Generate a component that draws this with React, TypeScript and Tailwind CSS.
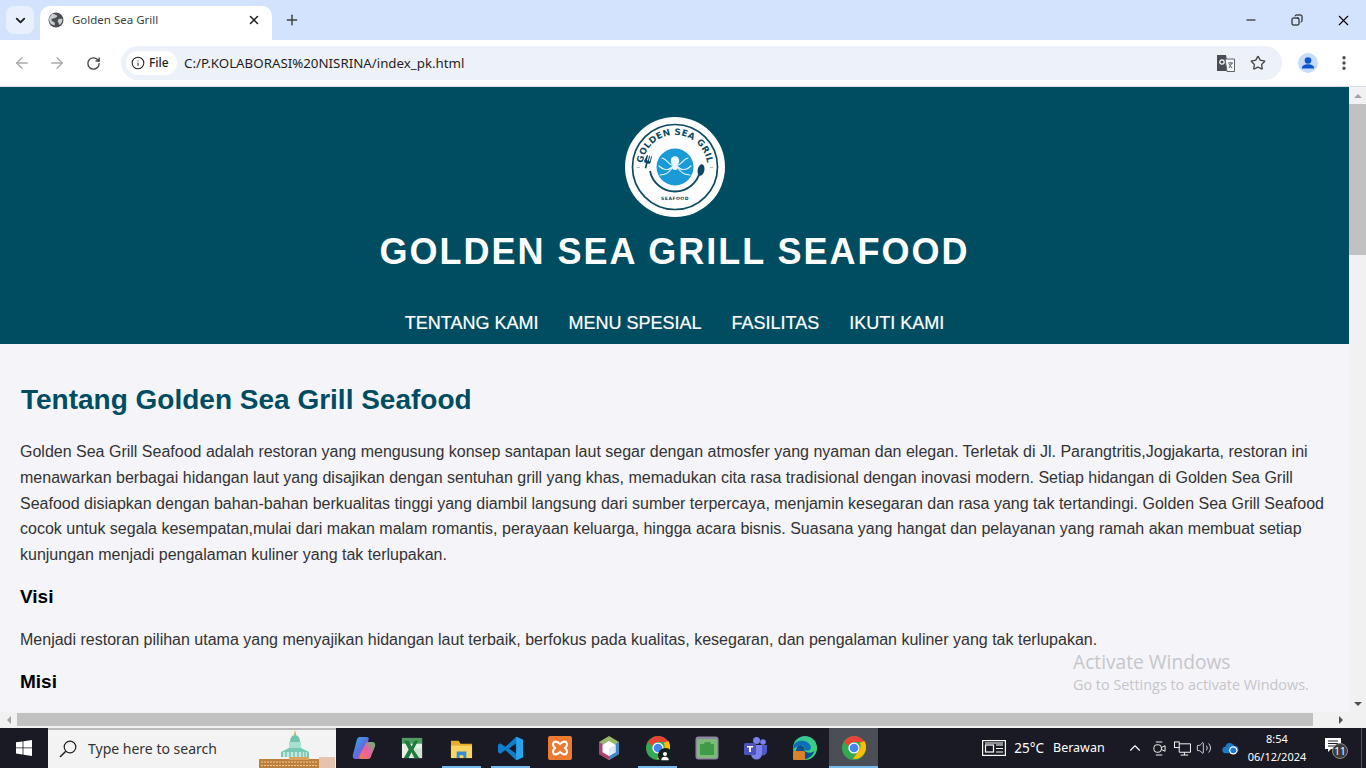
import { ArrowLeft, ArrowRight, Copy, Info, Minus, Plus, RotateCw, Star, X, ChevronDown, ChevronUp, MoreVertical, Volume2 } from "lucide-react";

const paragraph =
  "Golden Sea Grill Seafood adalah restoran yang mengusung konsep santapan laut segar dengan atmosfer yang nyaman dan elegan. Terletak di Jl. Parangtritis,Jogjakarta, restoran ini menawarkan berbagai hidangan laut yang disajikan dengan sentuhan grill yang khas, memadukan cita rasa tradisional dengan inovasi modern. Setiap hidangan di Golden Sea Grill Seafood disiapkan dengan bahan-bahan berkualitas tinggi yang diambil langsung dari sumber terpercaya, menjamin kesegaran dan rasa yang tak tertandingi. Golden Sea Grill Seafood cocok untuk segala kesempatan,mulai dari makan malam romantis, perayaan keluarga, hingga acara bisnis. Suasana yang hangat dan pelayanan yang ramah akan membuat setiap kunjungan menjadi pengalaman kuliner yang tak terlupakan.";

const navLinks = ["TENTANG KAMI", "MENU SPESIAL", "FASILITAS", "IKUTI KAMI"];

const Logo = () => (
  <svg viewBox="0 0 100 100" className="w-[100px] h-[100px] block">
    <circle cx="50" cy="50" r="50" fill="#fff" />
    <circle cx="50" cy="50" r="42.500" fill="none" stroke="#0c4a63" strokeWidth="1.700" />
    <path d="M25 54 A25.500 25.500 0 0 0 75 54" fill="none" stroke="#0c4a63" strokeWidth="1.800" />
    <defs>
      <path id="logoTop" d="M18 56 A32.500 32.500 0 1 1 82 56" />
    </defs>
    <text fontSize="8.800" fontWeight="700" fill="#0c4a63" fontFamily="'DejaVu Sans', sans-serif" letterSpacing="0.300">
      <textPath href="#logoTop" startOffset="50%" textAnchor="middle">GOLDEN SEA GRIL</textPath>
    </text>
    <text x="50" y="83" textAnchor="middle" fontSize="4.500" fontWeight="700" fill="#0c4a63" fontFamily="'DejaVu Sans', sans-serif" letterSpacing="0.500">SEAFOOD</text>
    <circle cx="50" cy="50" r="18.500" fill="#1a9ad6" />
    <g fill="none" stroke="#eaf8fd" strokeWidth="1.100" strokeLinecap="round">
      <path d="M47 50 C43 54 38 53 34 49" />
      <path d="M47 51 C44 56 40 58 35 58" />
      <path d="M53 50 C57 54 62 53 66 49" />
      <path d="M53 51 C56 56 60 58 65 58" />
      <path d="M47 48 C43 47 42 42 37 41" />
      <path d="M53 48 C57 47 58 42 63 41" />
    </g>
    <ellipse cx="50" cy="44" rx="4.200" ry="4.800" fill="#eaf8fd" />
    <ellipse cx="50" cy="50" rx="3" ry="3" fill="#eaf8fd" />
    <g fill="#0c4a63">
      <path d="M22 38l1 .3-1 5 1 .3 1-5 1 .3-1 5 1 .3 1-5 1 .3-1.400 6c-.3 1-1 1.400-2 1.200l-1-.3-1.300 5-1.600-.4 1.300-5-.8-.3c-.8-.3-1.200-1-1-2z" />
      <ellipse cx="76" cy="53" rx="3.400" ry="5.800" transform="rotate(12 76 53)" />
    </g>
    <path d="M12 50.500h3M85 50.500h3" stroke="#9aa7ad" strokeWidth="0.800" />
  </svg>
);

const ChromeIcon = ({ size = 24 }: { size?: number }) => (
  <svg viewBox="0 0 24 24" width={size} height={size}>
    <circle cx="12" cy="12" r="12" fill="#34a853" />
    <path d="M12 0a12 12 0 0 1 10.400 6H12a6 6 0 0 0-5.600 3.800L2 6.300A12 12 0 0 1 12 0z" fill="#ea4335" />
    <path d="M22.400 6A12 12 0 0 1 11 24l5.200-7.800A6 6 0 0 0 17.600 8z" fill="#fbbc04" transform="translate(0 -1)" />
    <circle cx="12" cy="12" r="5.600" fill="#fff" />
    <circle cx="12" cy="12" r="4.300" fill="#4285f4" />
  </svg>
);

const TaskIcon = ({ children, active, open }: { children: React.ReactNode; active?: boolean; open?: boolean }) => (
  <div className={`relative w-[49px] h-full flex items-center justify-center ${active ? "bg-[#4b4e55]" : ""}`}>
    {children}
    {(open || active) && <div className={`absolute bottom-0 h-[2px] bg-[#76b9ed] ${active ? "inset-x-0" : "inset-x-[5px]"}`} />}
  </div>
);

const TaskbarIcons = () => (
  <>
    <TaskIcon>
      <svg viewBox="0 0 24 24" width="24" height="24">
        <defs>
          <linearGradient id="copA" x1="0" y1="0" x2="1" y2="1">
            <stop offset="0" stopColor="#2fb6e8" />
            <stop offset="0.5" stopColor="#5b6fe0" />
            <stop offset="1" stopColor="#c94fd0" />
          </linearGradient>
          <linearGradient id="copB" x1="0" y1="1" x2="1" y2="0">
            <stop offset="0" stopColor="#f4803c" />
            <stop offset="0.5" stopColor="#e95fa8" />
            <stop offset="1" stopColor="#54c06a" />
          </linearGradient>
        </defs>
        <path d="M8 1h7c2 0 2 2 1.400 3.400L11 20c-.8 2.400-2 3-4 3H4c-3 0-3.600-2.400-3-4.600L4.500 5C5.200 2.400 6 1 8 1z" fill="url(#copA)" />
        <path d="M16 6h4c3 0 3.600 2.400 3 4.600L19.500 19c-.7 2.600-1.500 4-3.500 4H9c-2 0-2-2-1.400-3.400L13 9c.6-2 1.400-3 3-3z" fill="url(#copB)" />
      </svg>
    </TaskIcon>
    <TaskIcon>
      <svg viewBox="0 0 24 24" width="23" height="23">
        <rect x="1" y="1" width="21" height="21" fill="#e6f2e6" />
        <rect x="1" y="1" width="21" height="6" fill="#4d9e5f" />
        <path d="M11 12h11v10H11z" fill="#cfe5cf" />
        <path d="M3 4l5 0 3 6 3-6 4 0-5 9 6 9-5 0-3-6-3 6-5 0 5-9z" fill="#1f7a3d" />
      </svg>
    </TaskIcon>
    <TaskIcon open>
      <svg viewBox="0 0 24 24" width="23" height="23">
        <path d="M1 4h8l2 3h12v15H1z" fill="#e8ad2c" />
        <path d="M1 9h22v13H1z" fill="#fcd462" />
        <path d="M7 15h10v7h-3v-3h-4v3H7z" fill="#2f8fd8" />
      </svg>
    </TaskIcon>
    <TaskIcon open>
      <svg viewBox="0 0 24 24" width="25" height="25">
        <path d="M17.500 0.800 24 3.500v17L17.500 23.200 7 13.500 2.400 17 0 15.700V8.300L2.400 7 7 10.500z" fill="#0f7fcb" />
        <path d="M17.500 7 10.500 12l7 5z" fill="#1a1a24" />
        <path d="M17.500 0.800 24 3.500v17l-6.500 2.700z" fill="#26a4ec" />
      </svg>
    </TaskIcon>
    <TaskIcon>
      <svg viewBox="0 0 24 24" width="24" height="24">
        <rect width="24" height="24" rx="2" fill="#ec7a30" />
        <path d="M6 6c2-1 4 0 6 2 2-2 4-3 6-2 2 2 1 4-1 6 2 2 3 4 1 6-2 1-4 0-6-2-2 2-4 3-6 2-2-2-1-4 1-6-2-2-3-4-1-6z" fill="none" stroke="#fff" strokeWidth="2" />
      </svg>
    </TaskIcon>
    <TaskIcon>
      <svg viewBox="0 0 24 24" width="24" height="24">
        <path d="M12 0 22 6v12L12 24 2 18V6z" fill="#9bb86a" />
        <path d="M2 6v12l10 6V12z" fill="#b0416e" />
        <path d="M22 6v12l-10 6V12z" fill="#3f86c8" />
        <path d="M12 5l6.500 3.700v7.500L12 20l-6.500-3.800V8.700z" fill="#fff" />
        <path d="M12 12.500v7.500l6.500-3.800V8.700z" fill="#dbe8f5" />
      </svg>
    </TaskIcon>
    <TaskIcon open>
      <div className="relative w-6 h-6">
        <ChromeIcon />
        <div className="absolute -right-[3px] -bottom-[3px] w-[15px] h-[15px] rounded-full bg-[#10201c] flex items-center justify-center">
          <svg viewBox="0 0 12 12" width="10" height="10">
            <circle cx="6" cy="3.600" r="2.400" fill="#fff" />
            <path d="M1.500 11c0-3 2-4 4.500-4s4.500 1 4.500 4z" fill="#fff" />
          </svg>
        </div>
      </div>
    </TaskIcon>
    <TaskIcon>
      <svg viewBox="0 0 24 24" width="24" height="24">
        <rect x="0.500" y="0.500" width="23" height="23" rx="3" fill="#8d8aa0" />
        <rect x="2" y="3" width="20" height="19" rx="2" fill="#7cba78" />
        <path d="M5 8h4l1-2h5l1 2h3v11H5z" fill="#3f9a4a" />
      </svg>
    </TaskIcon>
    <TaskIcon>
      <svg viewBox="0 0 24 24" width="24" height="24">
        <circle cx="19" cy="6" r="2.800" fill="#7b83eb" />
        <circle cx="12.500" cy="4.500" r="3.500" fill="#7b83eb" />
        <path d="M16 9h7v7a4 4 0 0 1-7 2z" fill="#5059c9" />
        <path d="M7 9h11v9a5.500 5.500 0 0 1-11 0z" fill="#7b83eb" />
        <rect x="0" y="7" width="12" height="12" rx="1.500" fill="#4b53bc" />
        <path d="M3 10h6v1.600H6.900V16H5.100v-4.400H3z" fill="#fff" />
      </svg>
    </TaskIcon>
    <TaskIcon>
      <div className="relative w-6 h-6">
        <svg viewBox="0 0 24 24" width="24" height="24">
          <defs>
            <linearGradient id="edgeA" x1="0" y1="0" x2="1" y2="1">
              <stop offset="0" stopColor="#35c1a6" />
              <stop offset="1" stopColor="#3fd66f" />
            </linearGradient>
          </defs>
          <circle cx="12" cy="12" r="12" fill="url(#edgeA)" />
          <path d="M0 12C1 6 6 4 11 5c5 1 8 5 6.500 8-1 2-5 2-6 0 1-3-3-5-6-3-3 1-5 3-5.500 2z" fill="#0c6fb5" />
          <path d="M5 10c4-2 7 1 6.500 4 1 3 6 4 10 1-2 6-8 9-13 8-5-2-8-7-3.500-13z" fill="#0a4f8f" />
        </svg>
        <div className="absolute left-0 bottom-0 w-3 h-[9px] bg-[#d9822b] rounded-[1px]" />
      </div>
    </TaskIcon>
    <TaskIcon active>
      <ChromeIcon />
    </TaskIcon>
  </>
);

export default function App() {
  return (
    <div className="h-screen w-full overflow-hidden flex flex-col bg-white font-['Liberation_Sans',sans-serif]">
      {/* Tab strip */}
      <div className="h-[40px] shrink-0 bg-[#d3e3fd] flex font-['Noto_Sans',sans-serif]">
        <div className="pl-[6px] pt-[6px]">
          <div className="w-[28px] h-[28px] rounded-[8px] bg-[#e8f0fe] flex items-center justify-center">
            <ChevronDown size={15} strokeWidth={3} className="text-[#1f1f1f]" />
          </div>
        </div>
        <div className="ml-[6px] mt-[6px] w-[232px] h-[34px] pb-[6px] bg-white rounded-t-[10px] flex items-center pl-[8px] pr-[11px]">
          <svg viewBox="0 0 16 16" width="16" height="16">
            <circle cx="8" cy="8" r="7.500" fill="#4a4d52" />
            <path d="M5 1.500c1 1 3 1 4 2s-1 2-2 2.500-3 0-3.500 1.500S5 9.500 6 10s1 2 .5 3.500C3.500 13 1.500 11 1 8c0-2.500 1.500-5 4-6.500zM11 7c1-.5 2.500-.5 3.500 0 0 2.500-1 4.500-3 6-.5-1.500-1-2-1.500-3s0-2.500 1-3z" fill="#c9ccd1" />
          </svg>
          <span className="ml-[8px] flex-1 text-[11.500px] text-[#3c4043]">Golden Sea Grill</span>
          <X size={14} strokeWidth={2.600} className="text-[#1f1f1f]" />
        </div>
        <div className="ml-[12px] mt-[6px] h-[28px] flex items-center">
          <Plus size={16} strokeWidth={2.200} className="text-[#3c4043]" />
        </div>
        <div className="flex-1" />
        <div className="flex items-center text-black">
          <div className="w-[46px] flex justify-center"><Minus size={14} strokeWidth={1.800} /></div>
          <div className="w-[46px] flex justify-center"><Copy size={12} strokeWidth={2} className="-scale-x-100" /></div>
          <div className="w-[46px] flex justify-center"><X size={17} strokeWidth={1.600} /></div>
        </div>
      </div>

      {/* Toolbar */}
      <div className="h-[47px] shrink-0 bg-white rounded-t-[10px] flex items-center border-b border-[#d8dde3] font-['Noto_Sans',sans-serif]">
        <div className="w-[121px] pl-[13px] flex items-center gap-[17px] text-[#a9abae] shrink-0">
          <ArrowLeft size={18} strokeWidth={1.800} />
          <ArrowRight size={18} strokeWidth={1.800} />
          <RotateCw size={15} strokeWidth={2.200} className="text-[#474747] ml-[3px]" />
        </div>
        <div className="w-[1161px] h-[34px] rounded-full bg-[#edf2fa] flex items-center pl-[5px] pr-[16px] shrink-0">
          <div className="h-[24px] w-[51px] rounded-full bg-white flex items-center pl-[5px] gap-[4px] text-[#1f1f1f]">
            <Info size={14} strokeWidth={1.800} />
            <span className="text-[12px] font-medium">File</span>
          </div>
          <span className="ml-[7px] text-[13.300px] text-[#1f1f1f] flex-1 mt-px">C:/P.KOLABORASI%20NISRINA/index_pk.html</span>
          <svg viewBox="0 0 18 18" width="18" height="18" className="mr-[15px]">
            <path d="M0 1h9l3 16H0z" fill="#4a4d52" />
            <path d="M8 5h9.500v12.500H10z" fill="#f5f6f8" stroke="#5f6368" />
            <circle cx="5" cy="8" r="2.200" fill="none" stroke="#fff" strokeWidth="1.200" />
            <path d="M11 9h5M13.500 8v1M12 14l3-5M12 10l3 4" stroke="#5f6368" strokeWidth="1" fill="none" />
          </svg>
          <Star size={16} strokeWidth={2} className="text-[#474747]" />
        </div>
        <div className="ml-[16px] w-[20px] h-[20px] rounded-full bg-[#c7dcf8] flex items-center justify-center shrink-0">
          <svg viewBox="0 0 20 20" width="20" height="20">
            <circle cx="10" cy="7.500" r="3.300" fill="#0b57d0" />
            <path d="M3.800 15.500c0-3 3-4.200 6.200-4.200s6.200 1.200 6.200 4.200z" fill="#0b57d0" />
          </svg>
        </div>
        <MoreVertical size={18} strokeWidth={2.400} className="ml-[17px] text-[#474747] shrink-0" />
      </div>

      {/* Browser viewport */}
      <div className="relative flex-1 min-h-0 flex flex-col">
        <div className="flex-1 min-h-0 flex">
          <main className="flex-1 min-w-0 overflow-hidden bg-[#f4f4f9] text-[#333]">
            <header className="h-[257px] bg-[#004d61] pt-[30px] flex flex-col items-center text-white">
              <Logo />
              <h1 className="mt-[14px] text-[36px] leading-[41px] font-bold tracking-[2px]">GOLDEN SEA GRILL SEAFOOD</h1>
              <nav className="mt-[39px] flex gap-[30px] text-[18px] leading-[24px] [-webkit-text-stroke:0.2px_white]">
                {navLinks.map((link) => (
                  <a key={link}>{link}</a>
                ))}
              </nav>
            </header>
            <section className="px-[20px] pt-[40px]">
              <h2 className="pl-px text-[28px] leading-[32px] font-bold text-[#004d61]">Tentang Golden Sea Grill Seafood</h2>
              <p className="mt-[23.400px] text-[16px] leading-[25.600px]">{paragraph}</p>
              <h3 className="mt-[18.600px] text-[19px] leading-[22px] font-bold text-black">Visi</h3>
              <p className="mt-[19px] text-[16px] leading-[25.600px]">
                Menjadi restoran pilihan utama yang menyajikan hidangan laut terbaik, berfokus pada kualitas, kesegaran, dan pengalaman kuliner yang tak terlupakan.
              </p>
              <h3 className="mt-[18px] text-[19px] leading-[22px] font-bold text-black">Misi</h3>
            </section>
          </main>
          {/* Vertical scrollbar */}
          <div className="w-[17px] shrink-0 bg-[#f1f1f1] flex flex-col items-center">
            <div className="h-[17px] flex items-center justify-center">
              <div className="w-0 h-0 border-x-[4px] border-x-transparent border-b-[4px] border-b-[#a3a3a3]" />
            </div>
            <div className="w-full h-[151px] bg-[#c1c1c1]" />
            <div className="flex-1" />
            <div className="h-[17px] flex items-center justify-center">
              <div className="w-0 h-0 border-x-[4px] border-x-transparent border-t-[4px] border-t-[#505050]" />
            </div>
          </div>
        </div>
        {/* Horizontal scrollbar */}
        <div className="h-[16px] shrink-0 bg-[#f1f1f1] flex items-center">
          <div className="w-[17px] flex justify-center">
            <div className="w-0 h-0 border-y-[4px] border-y-transparent border-r-[4px] border-r-[#a3a3a3]" />
          </div>
          <div className="w-[1296px] h-[13px] mb-px bg-[#c1c1c1]" />
          <div className="w-[19px]" />
          <div className="w-[17px] flex justify-center">
            <div className="w-0 h-0 border-y-[4px] border-y-transparent border-l-[4px] border-l-[#505050]" />
          </div>
        </div>
        {/* Activation watermark */}
        <div className="absolute left-[1073px] top-[562px] text-[#c6c6ca] font-['Open_Sans',sans-serif]">
          <div className="text-[19.200px] leading-[26px]">Activate Windows</div>
          <div className="text-[14.400px] leading-[20px]">Go to Settings to activate Windows.</div>
        </div>
      </div>

      {/* Taskbar */}
      <footer className="h-[40px] shrink-0 bg-[#1a1a24] flex items-center text-white font-['Noto_Sans',sans-serif]">
        <div className="w-[48px] h-full flex items-center justify-center shrink-0">
          <svg viewBox="0 0 16 16" width="16" height="16" fill="#fff">
            <path d="M0 2.300 6.600 1.400V7.500H0zM7.400 1.300 16 0V7.500H7.400zM0 8.300H6.600V14.500L0 13.600zM7.400 8.300H16V16L7.400 14.700z" />
          </svg>
        </div>
        <div className="relative w-[288px] h-full bg-[#f3f3f3] border-t-2 border-[#b9b9b9] flex items-center pl-[11px] shrink-0 overflow-hidden">
          <svg viewBox="0 0 18 18" width="18" height="18" fill="none" stroke="#1f1f1f" strokeWidth="1.200">
            <circle cx="11" cy="7" r="5.800" />
            <path d="M6.800 11.200 1 17" strokeWidth="1.500" />
          </svg>
          <span className="ml-[11px] text-[14px] text-[#333] -mt-[2px]">Type here to search</span>
          <svg viewBox="0 0 76 38" width="76" height="38" className="absolute right-px bottom-0">
            <path d="M36 0l1 5h-2z" fill="#c9a23f" />
            <path d="M31 12c0-4 2-7 5-7s5 3 5 7z" fill="#6fc4ad" />
            <path d="M30 12h12v6H30z" fill="#a5e0d0" />
            <path d="M22 27v-5l8-4h12l8 4v5z" fill="#78c8b4" />
            <path d="M24 22h24v5H24z" fill="#bfeade" />
            <path d="M27 22v5M31 22v5M35 22v5M39 22v5M43 22v5M46 22v5" stroke="#4f9c88" strokeWidth="0.800" />
            <rect x="0" y="29" width="60" height="9" fill="#bd7f3d" />
            <rect x="30" y="27" width="20" height="3" fill="#d9a35c" />
            <rect x="60" y="27" width="16" height="11" fill="#e4c4ae" />
            <path d="M2 32h56M2 35.500h56" stroke="#f0cf90" strokeWidth="1" strokeDasharray="2 1" />
          </svg>
        </div>
        <div className="flex h-full shrink-0 ml-[3px]">
          <TaskbarIcons />
        </div>
        <div className="flex-1" />
        <div className="flex items-center h-full shrink-0">
          <svg viewBox="0 0 24 16" width="24" height="16" fill="none" stroke="#fff" strokeWidth="1.200">
            <rect x="0.600" y="0.600" width="22.800" height="14.800" />
            <rect x="3.500" y="5" width="8" height="7" />
            <path d="M14 5h7M14 8.500h7M14 12h7M3 3h18" />
          </svg>
          <span className="ml-[8px] text-[13.500px]">25°C</span>
          <span className="ml-[9px] text-[12.500px] w-[53px]">Berawan</span>
          <ChevronUp size={18} strokeWidth={1.500} className="ml-[20px]" />
          <svg viewBox="0 0 14 18" width="13" height="17" className="ml-[9px]" fill="none" stroke="#fff" strokeWidth="1">
            <path d="M3 2h7M3 16h7" />
            <rect x="1" y="5" width="8" height="8" rx="3" />
            <path d="M9 8l4-2v6l-4-2" />
          </svg>
          <svg viewBox="0 0 18 16" width="17" height="15" className="ml-[8px]" fill="none" stroke="#fff" strokeWidth="1">
            <rect x="0.500" y="1" width="5" height="6" />
            <path d="M5.500 3H17.500V12H5.500V7M11 12v3M7 15h8" />
          </svg>
          <Volume2 size={16} strokeWidth={1.200} className="ml-[5px]" />
          <svg viewBox="0 0 18 14" width="17" height="13" className="ml-[10px]">
            <path d="M4 12a3.500 3.500 0 0 1-.5-7 5 5 0 0 1 9.500-1 4 4 0 0 1 1 8z" fill="#1d79c9" />
            <circle cx="12" cy="9" r="4.500" fill="#fff" />
            <circle cx="12" cy="9" r="3.200" fill="#1d79c9" />
          </svg>
          <div className="w-[76px] text-center text-[11px] leading-[18px]">
            <div>8:54</div>
            <div>06/12/2024</div>
          </div>
          <div className="relative w-[20px] h-[20px] ml-[10px]">
            <svg viewBox="0 0 16 15" width="16" height="15" fill="#fff">
              <path d="M0 0h16v11H6l-3 3v-3H0z" />
              <path d="M3 3h10M3 5.500h10M3 8h7" stroke="#1a1a24" strokeWidth="1" />
            </svg>
            <div className="absolute left-[7px] top-[5px] w-[16px] h-[16px] rounded-full bg-[#3c3c40] border border-[#8a8a8a] flex items-center justify-center text-[10px] leading-none">11</div>
          </div>
          <div className="ml-[16px] mr-[4px] w-px h-full bg-[#555]" />
        </div>
      </footer>
    </div>
  );
}
